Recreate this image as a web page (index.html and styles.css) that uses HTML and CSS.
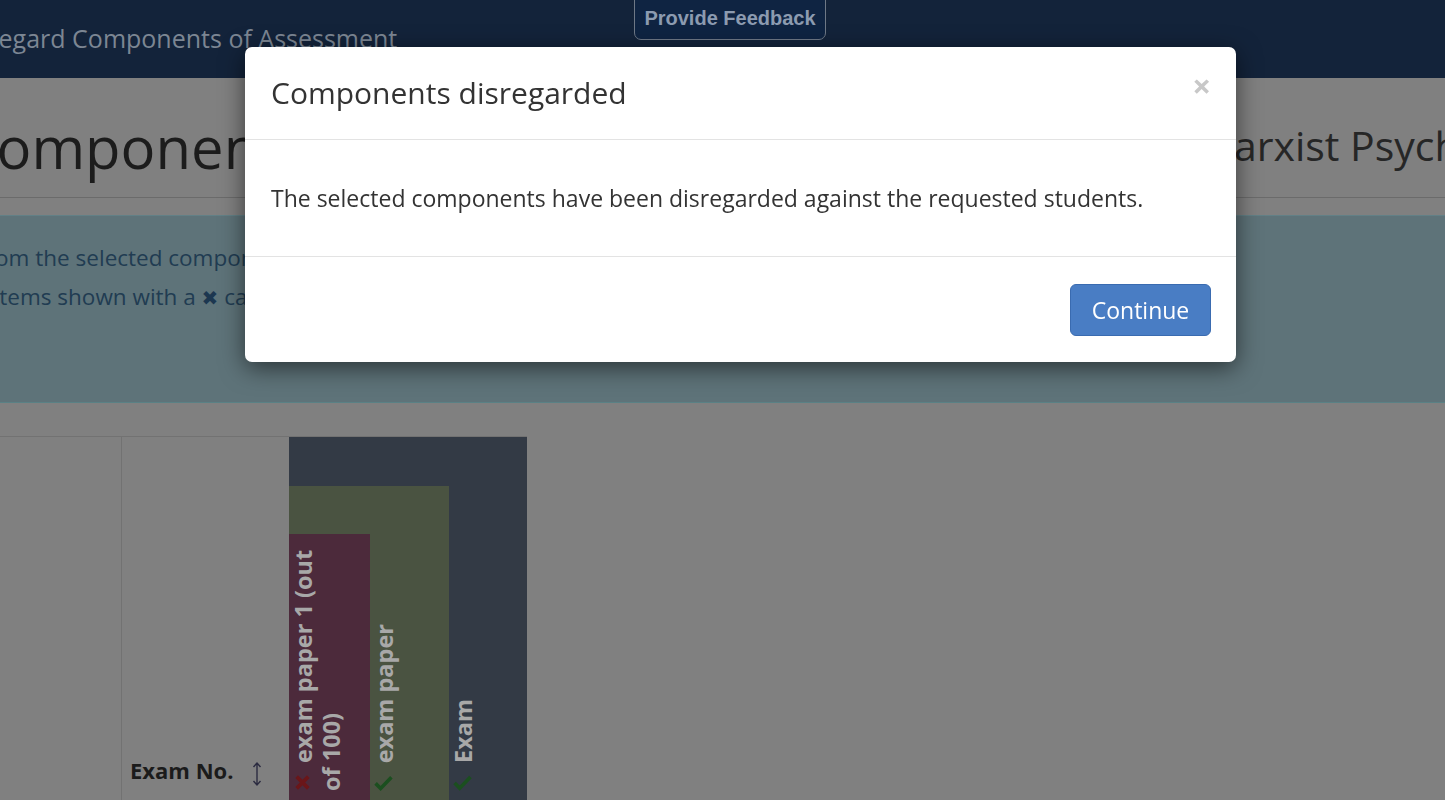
FILE: index.html
```html
<!DOCTYPE html>
<html lang="en">
<head>
<meta charset="utf-8">
<title>Disregard Components of Assessment</title>
<link rel="stylesheet" href="styles.css">
</head>
<body>
<div class="page">
  <header class="navbar">
    <div class="nav-title">Disregard Components of Assessment</div>
    <a class="feedback">Provide Feedback</a>
  </header>

  <div class="page-header">
    <h1 class="heading">Components of Assessment</h1>
    <div class="subject">Marxist Psychology</div>
  </div>

  <div class="info">
    <p class="line line1">Marks from the selected components will be disregarded for the selected students.</p>
    <p class="line line2">Items shown with a <span class="x-icon">&#10006;</span> cannot be disregarded.</p>
  </div>

  <div class="grid">
    <div class="cell c-select"></div>
    <div class="cell c-examno"><span>Exam No.</span>
      <svg class="sort" width="12" height="26" viewBox="0 0 12 26"><path d="M6 2v22M2.5 6L6 2l3.5 4M2.5 20L6 24l3.5-4" fill="none" stroke="#2b2b40" stroke-width="1.4"/></svg>
    </div>
    <div class="cell c-exam"><div class="vtext"><svg class="ico" width="19" height="17" viewBox="0 0 18 16"><path d="M1.5 8.5l4.8 4.8L16.5 2.8" fill="none" stroke="#1b4f1f" stroke-width="3.4"/></svg>Exam</div></div>
    <div class="cell c-paper-top"></div>
    <div class="cell c-paper-mid"></div>
    <div class="cell c-paper"><div class="vtext"><svg class="ico" width="19" height="17" viewBox="0 0 18 16"><path d="M1.5 8.5l4.8 4.8L16.5 2.8" fill="none" stroke="#1b4f1f" stroke-width="3.4"/></svg>exam paper</div></div>
    <div class="cell c-paper1"><div class="vtext two"><svg class="ico" width="17" height="17" viewBox="0 0 16 16"><path d="M2.5 2.5l11 11M13.5 2.5l-11 11" fill="none" stroke="#6a1619" stroke-width="3.6"/></svg>exam paper 1 (out of 100)</div></div>
  </div>
</div>

<div class="modal">
  <div class="modal-header">
    <h4 class="modal-title">Components disregarded</h4>
    <span class="close">&times;</span>
  </div>
  <div class="modal-body">
    <p>The selected components have been disregarded against the requested students.</p>
  </div>
  <div class="modal-footer">
    <button class="btn">Continue</button>
  </div>
</div>
</body>
</html>
```

FILE: styles.css
```css
html, body {
  margin: 0;
  padding: 0;
  height: 100%;
  overflow: hidden;
}
body {
  background: #808080;
  font-family: "Open Sans", "Liberation Sans", sans-serif;
  color: #1e1e1e;
}
.page {
  width: 100%;
  overflow: hidden;
}
.navbar {
  position: relative;
  height: 78px;
  background: #13233a;
  display: flex;
  align-items: center;
}
.nav-title {
  margin-left: -48px;
  padding-bottom: 2px;
  font-size: 25px;
  color: #7c8693;
  white-space: nowrap;
}
.feedback {
  position: absolute;
  left: 634px;
  top: -10px;
  width: 192px;
  box-sizing: border-box;
  padding: 16px 0 10px;
  line-height: 22px;
  text-align: center;
  font-family: "Liberation Sans", Arial, sans-serif;
  font-weight: bold;
  font-size: 20px;
  color: #8c9bb0;
  background: #0f2442;
  border: 1.5px solid #6e7886;
  border-radius: 0 0 7px 7px;
}
.page-header {
  display: flex;
  align-items: center;
  height: 119px;
  border-bottom: 1.5px solid #6b6b6b;
  overflow: hidden;
}
.heading {
  flex: 0 0 1237px;
  margin: 18px 0 0 -40px;
  font-weight: normal;
  font-size: 58px;
  color: #1c1c1c;
  white-space: nowrap;
}
.subject {
  flex: 0 0 auto;
  font-size: 41px;
  color: #262626;
  white-space: nowrap;
  padding-top: 14px;
}
.info {
  margin-top: 17px;
  height: 188px;
  background: #5e7379;
  border-top: 1px solid #628086;
  border-bottom: 1.5px solid #5a8185;
  box-sizing: border-box;
  padding-top: 22px;
  color: #213c52;
  font-size: 22.5px;
}
.line {
  margin: 0;
  line-height: 39px;
  white-space: nowrap;
}
.line1 { margin-left: -92px; }
.line2 { margin-left: -7px; }
.x-icon {
  font-family: "DejaVu Sans", sans-serif;
  font-size: 20px;
  color: #1c3750;
}
.grid {
  margin-top: 33px;
  display: grid;
  grid-template-columns: 122px 167px 81px 79px 78px;
  grid-template-rows: 49px 48px 270px;
  border-top: 1.5px solid #727272;
  width: 527px;
}
.cell { box-sizing: border-box; }
.c-select {
  grid-column: 1;
  grid-row: 1 / 4;
  border-right: 1.5px solid #727272;
}
.c-examno {
  grid-column: 2;
  grid-row: 1 / 4;
  display: flex;
  align-items: flex-end;
  gap: 18px;
  padding: 0 0 19px 8px;
  font-weight: bold;
  font-size: 22px;
  color: #1b1b1b;
}
.c-examno .sort { margin-bottom: -2px; }
.c-exam {
  grid-column: 5;
  grid-row: 1 / 4;
  background: #333a45;
  display: flex;
  align-items: flex-end;
}
.c-paper-top {
  grid-column: 3 / 5;
  grid-row: 1;
  background: #333a45;
}
.c-paper-mid {
  grid-column: 3 / 5;
  grid-row: 2;
  background: #4a5341;
}
.c-paper {
  grid-column: 4;
  grid-row: 3;
  background: #4a5341;
  display: flex;
  align-items: flex-end;
}
.c-paper1 {
  grid-column: 3;
  grid-row: 3;
  background: #4c2a3b;
  display: flex;
  align-items: flex-end;
}
.vtext {
  writing-mode: vertical-rl;
  transform: rotate(180deg);
  font-weight: bold;
  font-size: 23.5px;
  line-height: 28px;
  color: #a8a8a8;
  padding: 13px 0 6px 0;
  white-space: nowrap;
}
.vtext.two {
  white-space: normal;
  height: 270px;
  box-sizing: border-box;
}
.vtext .ico {
  transform: rotate(180deg);
  margin-bottom: 11px;
}
.modal {
  position: fixed;
  left: 245px;
  top: 47px;
  width: 991px;
  background: #fff;
  border-radius: 7px;
  box-shadow: 0 6px 24px rgba(0, 0, 0, 0.55);
  overflow: hidden;
}
.modal-header {
  position: relative;
  padding: 24px 26px;
  border-bottom: 1.5px solid #e3e3e3;
}
.modal-title {
  margin: 0;
  font-weight: normal;
  font-size: 30px;
  line-height: 44px;
  color: #333;
}
.close {
  position: absolute;
  right: 25px;
  top: 22px;
  font-size: 33px;
  font-weight: bold;
  line-height: 1;
  color: #c8c8c8;
}
.modal-body {
  padding: 25px 26px;
  border-bottom: 1.5px solid #e3e3e3;
}
.modal-body p {
  margin: 18px 0;
  font-size: 23px;
  line-height: 30px;
  color: #333;
}
.modal-footer {
  display: flex;
  justify-content: flex-end;
  padding: 27px 25px 26px;
}
.btn {
  font-family: "Open Sans", "Liberation Sans", sans-serif;
  font-size: 23px;
  color: #fff;
  background: #497dc4;
  border: 1.5px solid #3a6bb0;
  border-radius: 6px;
  width: 141px;
  height: 52px;
  padding: 0;
}
```
